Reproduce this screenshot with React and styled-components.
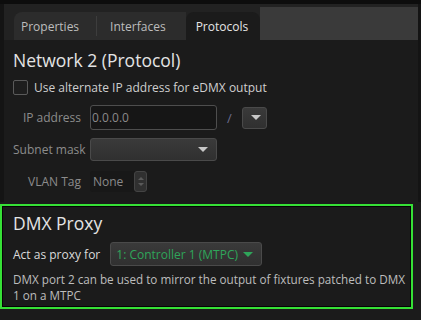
import React from 'react';
import styled, { createGlobalStyle } from 'styled-components';

const GlobalStyle = createGlobalStyle`
  html, body {
    margin: 0;
    padding: 0;
    background: #1b1b1b;
  }
  body {
    font-family: "Open Sans", "Noto Sans", sans-serif;
    color: #d4d4d4;
    overflow: hidden;
  }
`

const Window = styled.div`
  width: 421px;
  height: 320px;
  background: #1b1b1b;
  overflow: hidden;
  display: flex;
  flex-direction: column;
  border-top: 4px solid #0d0d0d;
  box-sizing: border-box;
`

const Upper = styled.div`
  border-left: 4px solid #141414;
  border-right: 3px solid #141414;
`

const TabBar = styled.div`
  display: flex;
  align-items: flex-end;
  height: 36px;
  background: #222222;
  padding-left: 10px;
`

const TabGroup = styled.div`
  display: flex;
  align-items: center;
  height: 28px;
  background: #2c2c2c;
  border-radius: 8px 0 0 0;
`

const Tab = styled.div`
  height: 28px;
  display: flex;
  align-items: center;
  padding: ${({ $pad }) => $pad || '0 8px'};
  font-size: 12px;
  color: ${({ $active }) => ($active ? '#e6e6e6' : '#bdbdbd')};
  background: ${({ $active }) => ($active ? '#1b1b1b' : 'transparent')};
  border-radius: ${({ $active }) => ($active ? '8px 8px 0 0' : '0')};
  box-sizing: border-box;
`

const TabSep = styled.div`
  width: 1px;
  height: 20px;
  background: #3d3d3d;
`

const TabFill = styled.div`
  flex: 1;
  height: 33px;
  background: #3a3a3a;
`

const Content = styled.div`
  padding: 8px 0 10px 9px;
`

const Heading = styled.div`
  font-size: 17.5px;
  color: #e4e4e4;
  line-height: 24px;
`

const CheckRow = styled.label`
  display: flex;
  align-items: center;
  gap: 6px;
  margin-top: 7px;
  font-size: 12px;
  color: #cfcfcf;
`

const CheckBox = styled.span`
  width: 13px;
  height: 13px;
  border: 1px solid #5a5a5a;
  background: #1e1e1e;
  border-radius: 2px;
`

const FormGrid = styled.div`
  display: grid;
  grid-template-columns: 68px auto;
  column-gap: 9px;
  align-items: center;
  margin-top: 9px;
`

const Label = styled.div`
  text-align: right;
  font-size: 12px;
  color: #8c8c8c;
  white-space: nowrap;
  height: ${({ $h }) => $h}px;
  line-height: ${({ $h }) => $h}px;
  margin-bottom: ${({ $gap }) => $gap || 0}px;
`

const Controls = styled.div`
  display: flex;
  align-items: center;
  height: ${({ $h }) => $h}px;
  margin-bottom: ${({ $gap }) => $gap || 0}px;
`

const TextInput = styled.div`
  width: 127px;
  height: 25px;
  box-sizing: border-box;
  border: 1px solid #4e4e4e;
  border-radius: 3px;
  background: #161616;
  font-size: 12px;
  color: #8a8a8a;
  line-height: 23px;
  padding-left: 1px;
`

const Slash = styled.span`
  margin: 0 10px 0 10px;
  font-size: 13px;
  color: #6d6d8d;
`

const Select = styled.div`
  width: ${({ $w }) => $w}px;
  height: ${({ $h }) => $h || 23}px;
  box-sizing: border-box;
  display: flex;
  align-items: center;
  justify-content: ${({ $end }) => ($end ? 'flex-end' : 'space-between')};
  border: 1px solid #4a4a4a;
  border-radius: 3px;
  background: linear-gradient(#3a3a3a, #303030);
  padding: ${({ $pad }) => $pad || '0 8px 0 9px'};
  font-size: 12px;
  color: ${({ $color }) => $color || '#cfcfcf'};
  white-space: nowrap;
`

const Arrow = styled.span`
  width: 0;
  height: 0;
  border-left: 5px solid transparent;
  border-right: 5px solid transparent;
  border-top: 5px solid ${({ $color }) => $color || '#c8c8c8'};
`

const SpinBox = styled.div`
  width: 57px;
  height: 21px;
  box-sizing: border-box;
  display: flex;
  align-items: center;
  justify-content: space-between;
  background: #181818;
  border-radius: 3px;
  padding-left: 3px;
  font-size: 12px;
  color: #8a8a8a;
`

const SpinButton = styled.div`
  width: 13px;
  height: 21px;
  box-sizing: border-box;
  border: 1px solid #444;
  border-radius: 3px;
  background: #303030;
  display: flex;
  flex-direction: column;
  align-items: center;
  justify-content: center;
  gap: 3px;
`

const SpinArrow = styled.span`
  width: 0;
  height: 0;
  border-left: 3px solid transparent;
  border-right: 3px solid transparent;
  ${({ $up }) => ($up ? 'border-bottom: 3px solid #5a5a5a;' : 'border-top: 3px solid #5a5a5a;')}
`

const ProxyBox = styled.div`
  margin: 2px 8px 0 0;
  border: 2px solid #36e036;
  box-shadow: inset 0 0 0 1px #050505;
  padding: 5px 0 4px 11px;
`

const ProxyRow = styled.div`
  display: flex;
  align-items: center;
  gap: 10px;
  margin-top: 7px;
  font-size: 12px;
  color: #dadada;
`

const Note = styled.p`
  margin: 5px 0 0 0;
  font-size: 11.7px;
  line-height: 16px;
  color: #bdbdbd;
`

export default function App() {
  return (
    <>
      <GlobalStyle />
      <Window>
        <Upper>
          <TabBar>
            <TabGroup>
              <Tab $pad="0 17px 0 7px">Properties</Tab>
              <TabSep />
              <Tab $pad="0 20px 0 13px">Interfaces</Tab>
            </TabGroup>
            <Tab $active $pad="0 12px 0 10px">Protocols</Tab>
            <TabFill />
          </TabBar>

          <Content>
            <Heading>Network 2 (Protocol)</Heading>
            <CheckRow>
              <CheckBox />
              Use alternate IP address for eDMX output
            </CheckRow>

            <FormGrid>
              <Label $h={25} $gap={8}>IP address</Label>
              <Controls $h={25} $gap={8}>
                <TextInput>0.0.0.0</TextInput>
                <Slash>/</Slash>
                <Select $w={25} $h={22} $end $pad="0 5px 0 0">
                  <Arrow />
                </Select>
              </Controls>

              <Label $h={23} $gap={10}>Subnet mask</Label>
              <Controls $h={23} $gap={10}>
                <Select $w={127}>
                  <span />
                  <Arrow />
                </Select>
              </Controls>

              <Label $h={21}>VLAN Tag</Label>
              <Controls $h={21}>
                <SpinBox>
                  None
                  <SpinButton>
                    <SpinArrow $up />
                    <SpinArrow />
                  </SpinButton>
                </SpinBox>
              </Controls>
            </FormGrid>
          </Content>
        </Upper>

        <ProxyBox>
          <Heading>DMX Proxy</Heading>
          <ProxyRow>
            Act as proxy for
            <Select $w={152} $h={24} $color="#2fa55a" $pad="0 8px 0 5px">
              1: Controller 1 (MTPC)
              <Arrow $color="#2fa55a" />
            </Select>
          </ProxyRow>
          <Note>
            DMX port 2 can be used to mirror the output of fixtures patched to DMX 1 on a MTPC
          </Note>
        </ProxyBox>
      </Window>
    </>
  );
}
